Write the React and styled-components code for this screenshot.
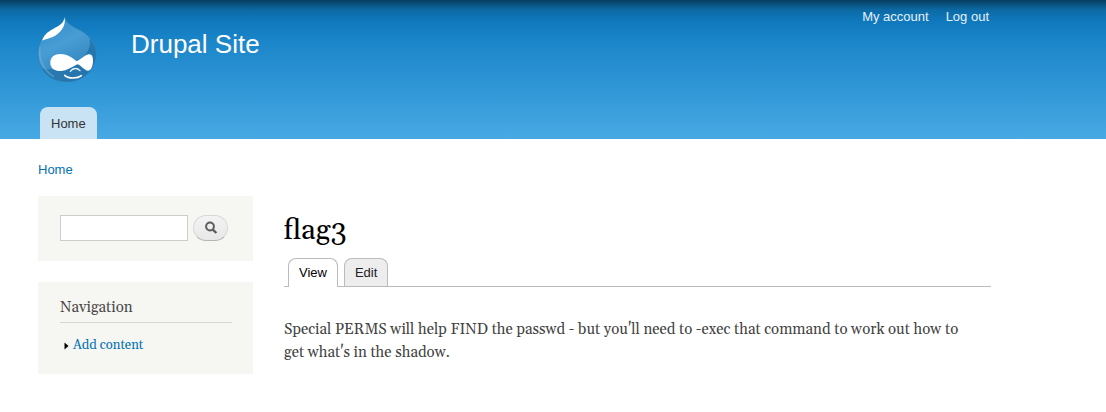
import React from 'react';
import styled, {createGlobalStyle} from 'styled-components';


const sans = '"Liberation Sans", Arial, sans-serif';
const serif = 'Georgia, Gelasio, "Liberation Serif", serif';


const GlobalStyle = createGlobalStyle`
  body {
    margin: 0;
    background: #fff;
    color: #434343;
    font-family: ${serif};
    font-size: 15px;
    line-height: 23px;
  }

  a {
    color: #0071b3;
    text-decoration: none;
  }
`;


const Header = styled.header`
  display: flex;
  flex-direction: column;
  justify-content: space-between;
  min-height: 139px;
  padding: 0 115px 0 38px;
  box-sizing: border-box;
  background: linear-gradient(#053d5f 0, #0d6aa5 10px, #0f77bb 20px, #1b86ca 42px, #48a9e4 100%);
  font-family: ${sans};
`;

const Masthead = styled.div`
  display: flex;
  align-items: flex-start;
`;

const LogoLink = styled.a`
  display: block;
  height: 67px;
  margin: 16px 34px 0 -1px;
`;

const SiteName = styled.a`
  && {
    color: #fffeff;
  }
  margin-top: 29px;
  font-size: 26px;
  line-height: 30px;
`;

const UserMenu = styled.nav`
  display: flex;
  gap: 17px;
  margin: 7px 2px 0 auto;
  font-size: 13px;
  line-height: 19px;

  a {
    color: #e6f1f8;
  }
`;

const MainMenu = styled.nav`
  display: flex;
  padding-left: 2px;
`;

const MenuTab = styled.a`
  && {
    color: #333;
  }
  padding: 1px 11px 0;
  border-radius: 8px 8px 0 0;
  background: #c9e3f4;
  font-size: 13px;
  line-height: 31px;
`;

const Breadcrumb = styled.nav`
  padding: 20px 38px 16px;
  font-family: ${sans};
  font-size: 13px;
  line-height: 21px;
`;

const Columns = styled.div`
  display: grid;
  grid-template-columns: 215px minmax(0, 1fr);
  gap: 31px;
  align-items: start;
  padding: 0 115px 38px 38px;
`;

const Sidebar = styled.aside`
  display: grid;
  gap: 21px;
`;

const Block = styled.section`
  padding: ${props => props.$search ? '19px 22px 20px' : '14px 21px 17px 22px'};
  background: #f6f6f2;
`;

const SearchForm = styled.form`
  display: flex;
  gap: 5px;
`;

const SearchInput = styled.input`
  box-sizing: border-box;
  width: 128px;
  height: 26px;
  padding: 2px 4px;
  border: 1px solid #ccc;
  background: #fff;
  font: 13px ${sans};
`;

const SearchButton = styled.button`
  display: flex;
  align-items: center;
  justify-content: center;
  box-sizing: border-box;
  width: 35px;
  height: 26px;
  padding: 0;
  border: 1px solid #d8d8d8;
  border-bottom-color: #b4b4b4;
  border-radius: 13px;
  background: linear-gradient(#f3f3f3, #e8e8e8);
`;

const BlockTitle = styled.h2`
  margin: 0 0 11px;
  padding-bottom: 3px;
  border-bottom: 1px solid #d6d6d6;
  color: #4a4a4a;
  font-size: 15px;
  font-weight: normal;
`;

const NavList = styled.ul`
  margin: 0;
  padding: 0;
  list-style: none;
  font-size: 13px;
`;

const NavItem = styled.li`
  display: flex;
  align-items: center;
  gap: 4px;
  padding-left: 4px;
`;

const PageTitle = styled.h1`
  margin: 17px 0 9px;
  color: #000;
  font-size: 29px;
  font-weight: normal;
  line-height: 36px;
`;

const Tabs = styled.nav`
  display: flex;
  gap: 6px;
  padding-left: 4px;
  border-bottom: 1px solid #bbb;
  font-family: ${sans};
  font-size: 13px;
`;

const Tab = styled.a`
  && {
    color: ${props => props.$active ? '#000' : '#222'};
  }
  margin-bottom: ${props => props.$active ? '-1px' : '0'};
  padding: 0 10px ${props => props.$active ? '1px' : '0'};
  border: 1px solid #bbb;
  border-bottom: 0;
  border-radius: 8px 8px 0 0;
  background: ${props => props.$active ? '#fff' : '#ededed'};
  line-height: 27px;
`;

const Body = styled.p`
  margin: 31px 0 0;
  padding-right: 16px;
`;


const Logo = () =>
  <svg width='60' height='67' viewBox='21 18 180 201' role='img' aria-label='Home'>
    <defs>
      <linearGradient id='drop' x1='0' y1='0' x2='.45' y2='1'>
        <stop offset='0' stopColor='#2f8ac6' />
        <stop offset='.5' stopColor='#489dd4' />
        <stop offset='1' stopColor='#2f82b9' />
      </linearGradient>
      <linearGradient id='shade' x1='.8' y1='0' x2='.3' y2='1'>
        <stop offset='0' stopColor='#196ca6' />
        <stop offset='1' stopColor='#2571a8' />
      </linearGradient>
    </defs>
    <path
      d='M104 20C108 42 130 49 151 61C181 78 197 99 197 132C197 181 158 215 110 215C61 215 24 179 24 132C24 98 39 77 68 61C88 50 100 42 104 20Z'
      fill='url(#drop)' stroke='#2f7bad' strokeWidth='2'
    />
    <path
      d='M178 83C190 98 197 113 197 132C197 181 158 215 110 215C78 215 48 199 34 175C83 186 139 166 164 137C178 118 183 102 178 83Z'
      fill='url(#shade)' opacity='.7'
    />
    <path d='M30 112C24 151 44 184 72 200' fill='none' stroke='#71b6df' strokeWidth='5' opacity='.5' />
    <path d='M104 22C100 42 88 46 68 58C52 66 42 76 36 92C48 86 62 86 79 75C97 62 107 47 104 22Z' fill='#fff' />
    <path
      d='M61 158C61 142 73 132 92 132C114 132 127 144 140 154C153 149 162 136 176 133C186 131 190 142 189 155C188 170 182 182 174 182C163 182 157 169 143 163C128 169 112 183 91 183C73 183 61 174 61 158Z'
      fill='#fff'
    />
    <path d='M121 184C129 173 142 173 150 182' fill='none' stroke='#e3f1f9' strokeWidth='4' strokeLinecap='round' />
    <path d='M104 196C116 207 143 206 154 197' fill='none' stroke='#fff' strokeWidth='5' strokeLinecap='round' />
  </svg>;

const SearchIcon = () =>
  <svg width='14' height='14' viewBox='0 0 14 14' aria-hidden='true'>
    <circle cx='6' cy='5.5' r='3.9' fill='none' stroke='#5c5c5c' strokeWidth='2' />
    <path d='M8.8 8.6L12.4 12' stroke='#5c5c5c' strokeWidth='2.4' />
  </svg>;

const Marker = () =>
  <svg width='5' height='8' viewBox='0 0 5 8' aria-hidden='true'>
    <path d='M.5 .5L4.5 4L.5 7.5Z' fill='#000' />
  </svg>;

const App = () =>
  <>
    <GlobalStyle />
    <Header>
      <Masthead>
        <LogoLink href='#'><Logo /></LogoLink>
        <SiteName href='#'>Drupal Site</SiteName>
        <UserMenu aria-label='User menu'>
          <a href='#'>My account</a>
          <a href='#'>Log out</a>
        </UserMenu>
      </Masthead>
      <MainMenu aria-label='Main menu'>
        <MenuTab href='#'>Home</MenuTab>
      </MainMenu>
    </Header>
    <Breadcrumb aria-label='Breadcrumb'>
      <a href='#'>Home</a>
    </Breadcrumb>
    <Columns>
      <Sidebar>
        <Block $search>
          <SearchForm role='search' onSubmit={e => e.preventDefault()}>
            <SearchInput type='text' aria-label='Search' />
            <SearchButton type='submit' aria-label='Search'><SearchIcon /></SearchButton>
          </SearchForm>
        </Block>
        <Block>
          <BlockTitle>Navigation</BlockTitle>
          <NavList>
            <NavItem>
              <Marker />
              <a href='#'>Add content</a>
            </NavItem>
          </NavList>
        </Block>
      </Sidebar>
      <main>
        <PageTitle>flag3</PageTitle>
        <Tabs aria-label='Page tabs'>
          <Tab href='#' $active>View</Tab>
          <Tab href='#'>Edit</Tab>
        </Tabs>
        <Body>
          Special PERMS will help FIND the passwd - but you'll need to -exec that command to work out how to
          get what's in the shadow.
        </Body>
      </main>
    </Columns>
  </>;

export default App;
